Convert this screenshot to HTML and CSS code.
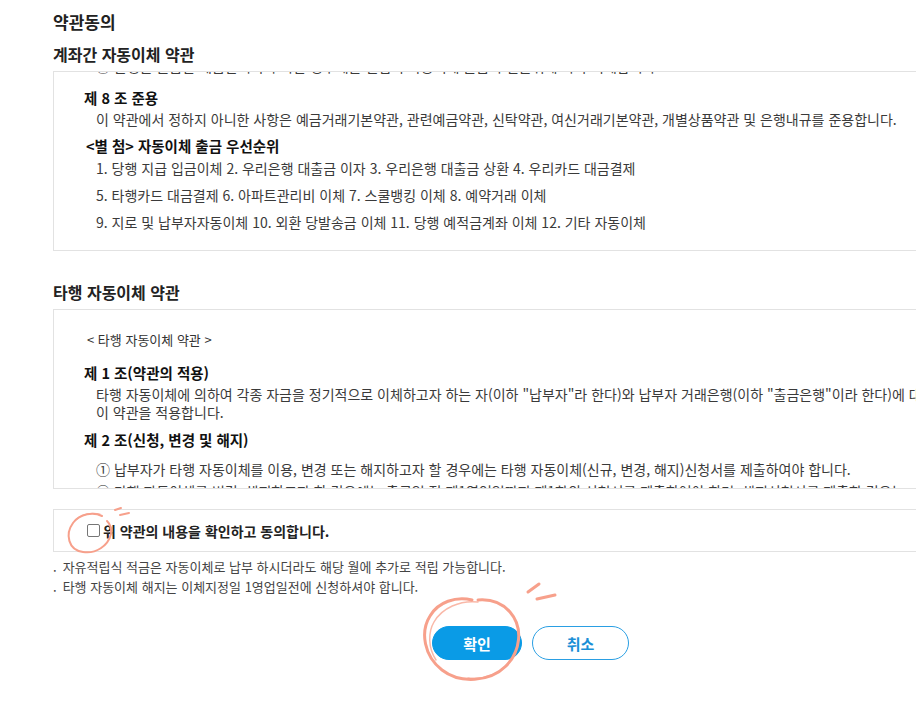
FILE: index.html
```html
<!DOCTYPE html>
<html lang="ko">
<head>
<meta charset="utf-8">
<title>약관동의</title>
<link rel="stylesheet" href="styles.css">
</head>
<body>
<div class="page">
  <h1 class="title">약관동의</h1>
  <h2 class="sub">계좌간 자동이체 약관</h2>
  <div class="terms terms-a">
    <div class="inner">
      <p class="line cut-top">② 은행은 출금할 예금잔액이 부족한 경우에는 별첨의 자동이체 출금 우선순위에 따라 이체합니다.</p>
      <p class="art">제 8 조 준용</p>
      <p class="line para-a">이 약관에서 정하지 아니한 사항은 예금거래기본약관, 관련예금약관, 신탁약관, 여신거래기본약관, 개별상품약관 및 은행내규를 준용합니다.</p>
      <p class="art attach">&lt;별 첨&gt; 자동이체 출금 우선순위</p>
      <p class="line item">1. 당행 지급 입금이체 2. 우리은행 대출금 이자 3. 우리은행 대출금 상환 4. 우리카드 대금결제</p>
      <p class="line item">5. 타행카드 대금결제 6. 아파트관리비 이체 7. 스쿨뱅킹 이체 8. 예약거래 이체</p>
      <p class="line item">9. 지로 및 납부자자동이체 10. 외환 당발송금 이체 11. 당행 예적금계좌 이체 12. 기타 자동이체</p>
    </div>
  </div>

  <h2 class="sub sub-b">타행 자동이체 약관</h2>
  <div class="terms terms-b">
    <div class="inner">
      <p class="head">&lt; 타행 자동이체 약관 &gt;</p>
      <p class="art">제 1 조(약관의 적용)</p>
      <p class="line para">타행 자동이체에 의하여 각종 자금을 정기적으로 이체하고자 하는 자(이하 "납부자"라 한다)와 납부자 거래은행(이하 "출금은행"이라 한다)에 대하여<br>이 약관을 적용합니다.</p>
      <p class="art art2">제 2 조(신청, 변경 및 해지)</p>
      <p class="line item2">① 납부자가 타행 자동이체를 이용, 변경 또는 해지하고자 할 경우에는 타행 자동이체(신규, 변경, 해지)신청서를 제출하여야 합니다.</p>
      <p class="line item2">② 타행 자동이체를 변경, 해지하고자 할 경우에는 출금일 전 제1영업일까지 제1항의 신청서를 제출하여야 하며, 해지신청서를 제출한 경우는</p>
    </div>
  </div>

  <div class="agree">
    <label class="agree-label"><span class="chk"></span>위 약관의 내용을 확인하고 동의합니다.</label>
  </div>

  <ul class="notes">
    <li>자유적립식 적금은 자동이체로 납부 하시더라도 해당 월에 추가로 적립 가능합니다.</li>
    <li>타행 자동이체 해지는 이체지정일 1영업일전에 신청하셔야 합니다.</li>
  </ul>

  <div class="buttons">
    <button class="btn btn-ok" type="button">확인</button>
    <button class="btn btn-cancel" type="button">취소</button>
  </div>
</div>

<svg class="mark mark-check" width="80" height="60" viewBox="0 0 80 60">
  <path d="M44 16 C36 12 22 13 15 23 C7 34 10 50 25 52 C38 54 50 46 53 34 C54 28 52 24 49 21" fill="none" stroke="#f7a08b" stroke-width="2" stroke-linecap="round"/>
  <path d="M42 14 C34 12 23 14 17 21" fill="none" stroke="#f7a08b" stroke-width="1.2" stroke-linecap="round" opacity="0.7"/>
  <path d="M57 10 L63 8" fill="none" stroke="#f7a08b" stroke-width="2" stroke-linecap="round"/>
  <path d="M62 15 L71 13" fill="none" stroke="#f7a08b" stroke-width="2" stroke-linecap="round"/>
</svg>

<svg class="mark mark-ok" width="170" height="120" viewBox="0 0 170 120">
  <path d="M74 30 C58 26 40 32 32 46 C22 62 26 86 44 100 C62 114 92 112 108 96 C122 82 126 58 112 42 C104 33 92 29 80 30" fill="none" stroke="#f7a08b" stroke-width="3" stroke-linecap="round"/>
  <path d="M80 32 C62 30 44 38 36 52 C30 62 30 78 38 90" fill="none" stroke="#f7a08b" stroke-width="1.5" stroke-linecap="round" opacity="0.75"/>
  <path d="M112 90 C104 104 86 110 70 108" fill="none" stroke="#f7a08b" stroke-width="1.5" stroke-linecap="round" opacity="0.7"/>
  <path d="M130 22 L141 14" fill="none" stroke="#f7a08b" stroke-width="3" stroke-linecap="round"/>
  <path d="M139 29 L157 25" fill="none" stroke="#f7a08b" stroke-width="3" stroke-linecap="round"/>
</svg>
</body>
</html>
```

FILE: styles.css
```css
html, body {
  margin: 0;
  padding: 0;
  background: #ffffff;
  overflow: hidden;
}

body {
  width: 916px;
  height: 713px;
  position: relative;
  font-family: "Malgun Gothic", "Noto Sans CJK KR", "Noto Sans", sans-serif;
  color: #333333;
}

.page {
  padding: 10px 0 0 53px;
  width: 960px;
}

.title {
  margin: 0;
  font-size: 17px;
  font-weight: 700;
  line-height: 24px;
  color: #222222;
}

.sub {
  margin: 8px 0 0;
  font-size: 16px;
  font-weight: 700;
  line-height: 24px;
  color: #222222;
}

.sub-b {
  margin-top: 29px;
}

.terms {
  border: 1px solid #e2e2e2;
  overflow: hidden;
  width: 940px;
}

.terms-a {
  margin-top: 5px;
  height: 178px;
}

.terms-b {
  margin-top: 5px;
  height: 178px;
}

.inner {
  padding: 0 0 0 30px;
}

.terms p {
  margin: 0;
  white-space: nowrap;
  font-size: 14px;
  line-height: 18px;
}

.terms .line {
  padding-left: 12px;
  color: #3a3a3a;
}

.cut-top {
  margin-top: -15px !important;
}

.terms .art {
  font-weight: 700;
  font-size: 14.5px;
  color: #111111;
  margin-top: 9px;
}

.terms-a .cut-top + .art {
  margin-top: 14px;
}

.terms .para-a {
  margin-top: 3px;
}

.terms .attach {
  margin-top: 9px;
  padding-left: 2px;
}

.terms .item {
  margin-top: 9px;
}

.terms .attach + .item {
  margin-top: 4px;
}

.terms-b .head {
  margin-top: 21px;
  padding-left: 3px;
  font-size: 13px;
  color: #333333;
}

.terms-b .art {
  margin-top: 15px;
}

.terms-b .para {
  margin-top: 3px;
}

.terms-b .art2 {
  margin-top: 10px;
}

.terms-b .item2 {
  margin-top: 11px;
}

.terms-b .item2 + .item2 {
  margin-top: 4px;
}

.agree {
  margin-top: 20px;
  border: 1px solid #e2e2e2;
  width: 940px;
  height: 43px;
  display: flex;
  align-items: center;
  padding-left: 33px;
  box-sizing: border-box;
}

.agree-label {
  display: flex;
  align-items: center;
  font-size: 14px;
  font-weight: 700;
  color: #222222;
}

.chk {
  width: 11px;
  height: 11px;
  border: 1px solid #767676;
  border-radius: 2px;
  background: #ffffff;
  margin-right: 3px;
}

.notes {
  list-style: none;
  margin: 5px 0 0;
  padding: 0;
}

.notes li {
  font-size: 13px;
  line-height: 20px;
  color: #444444;
}

.notes li::before {
  content: ".";
  margin-right: 6px;
}

.buttons {
  display: flex;
  justify-content: center;
  gap: 10px;
  margin-top: 29px;
  width: 955px;
}

.btn {
  height: 34px;
  border-radius: 17px;
  font-family: inherit;
  font-size: 15px;
  font-weight: 700;
  cursor: pointer;
}

.btn-ok {
  width: 90px;
  background: #0a9be6;
  border: 1px solid #0a9be6;
  color: #ffffff;
}

.btn-cancel {
  width: 97px;
  background: #ffffff;
  border: 1px solid #2a9fe3;
  color: #1a8fd6;
}

.mark {
  position: absolute;
  pointer-events: none;
}

.mark-check {
  left: 58px;
  top: 500px;
}

.mark-ok {
  left: 398px;
  top: 570px;
}
```
